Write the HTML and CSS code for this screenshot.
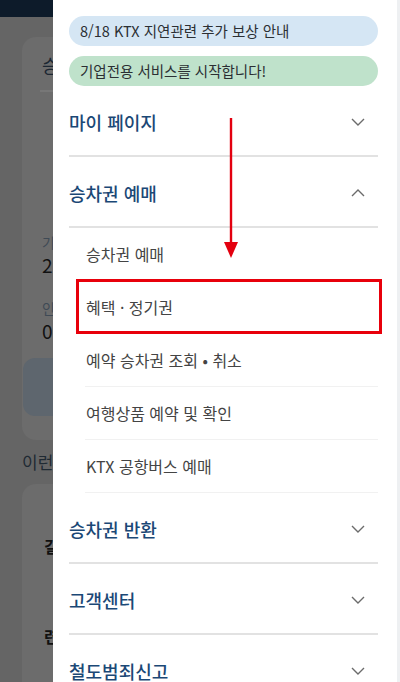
FILE: index.html
```html
<!DOCTYPE html>
<html lang="ko">
<head>
  <meta charset="UTF-8">
  <meta name="viewport" content="width=device-width, initial-scale=1.0">
  <title>메뉴</title>
  <link rel="stylesheet" href="styles.css">
</head>
<body>
  <div class="screen">
    <div class="backdrop">
      <div class="topbar"></div>
      <div class="page">
        <div class="card">
          <div class="card-title">승</div>
          <div class="card-line"></div>
          <div class="field field-date">
            <span class="field-label">기</span>
            <span class="field-value">2</span>
          </div>
          <div class="field">
            <span class="field-label">인</span>
            <span class="field-value">0</span>
          </div>
          <div class="card-button"></div>
        </div>
        <div class="section-title">이런</div>
        <div class="card card-low">
          <div class="low-row">길</div>
          <div class="low-row">련</div>
        </div>
      </div>
    </div>

    <nav class="drawer">
      <div class="notice notice-blue">8/18 KTX 지연관련 추가 보상 안내</div>
      <div class="notice notice-green">기업전용 서비스를 시작합니다!</div>

      <div class="menu-head">
        <span>마이 페이지</span>
        <svg class="chev" width="14" height="8" viewBox="0 0 14 8"><path d="M1 1l6 6 6-6" /></svg>
      </div>

      <div class="menu-head">
        <span>승차권 예매</span>
        <svg class="chev" width="14" height="8" viewBox="0 0 14 8"><path d="M1 7l6-6 6 6" /></svg>
      </div>
      <ul class="sub">
        <li>승차권 예매</li>
        <li class="marked">혜택 · 정기권<span class="mark-box"></span></li>
        <li>예약 승차권 조회 • 취소</li>
        <li>여행상품 예약 및 확인</li>
        <li>KTX 공항버스 예매</li>
      </ul>

      <div class="menu-head">
        <span>승차권 반환</span>
        <svg class="chev" width="14" height="8" viewBox="0 0 14 8"><path d="M1 1l6 6 6-6" /></svg>
      </div>
      <div class="menu-head">
        <span>고객센터</span>
        <svg class="chev" width="14" height="8" viewBox="0 0 14 8"><path d="M1 1l6 6 6-6" /></svg>
      </div>
      <div class="menu-head">
        <span>철도범죄신고</span>
        <svg class="chev" width="14" height="8" viewBox="0 0 14 8"><path d="M1 1l6 6 6-6" /></svg>
      </div>

      <!-- annotation arrow -->
      <svg class="arrow" width="16" height="142" viewBox="0 0 16 142">
        <rect x="6.8" y="0" width="2.4" height="128" fill="#e3000f" />
        <path d="M1 124 L15 124 L8 140 Z" fill="#e3000f" />
      </svg>
    </nav>
  </div>
</body>
</html>
```

FILE: styles.css
```css
body {
  margin: 0;
  padding: 0;
  font-family: "Noto Sans CJK KR", "Noto Sans", sans-serif;
  background: #676767;
}
.screen {
  display: flex;
  width: 400px;
  height: 682px;
  overflow: hidden;
}

/* dimmed page behind the drawer */
.backdrop {
  width: 53px;
  flex-shrink: 0;
  overflow: hidden;
  background: #656565;
}
.topbar {
  height: 17px;
  background: #0d1b2a;
}
.page {
  padding: 20px 0 0 22px;
  white-space: nowrap;
}
.card {
  background: #6c6c6c;
  border-radius: 14px 0 0 14px;
  height: 403px;
  padding: 0 0 0 20px;
  box-sizing: border-box;
}
.card-title {
  padding-top: 15px;
  font-size: 18px;
  line-height: 26px;
  color: #1c2733;
}
.card-line {
  height: 2px;
  background: #777;
  margin: 12px 0 0 -2px;
}
.field {
  display: flex;
  flex-direction: column;
  margin-top: 20px;
}
.field-date {
  margin-top: 140px;
}
.field-label {
  font-size: 14px;
  line-height: 20px;
  color: #3f4a55;
}
.field-value {
  font-size: 19px;
  line-height: 26px;
  color: #111;
}
.card-button {
  margin: 14px 0 0 -19px;
  height: 58px;
  background: #5e666e;
  border-radius: 12px 0 0 12px;
}
.section-title {
  font-size: 17px;
  line-height: 24px;
  margin: 10px 0 0 0;
  color: #1f2a33;
}
.card-low {
  margin-top: 10px;
  height: 240px;
  padding-left: 22px;
}
.low-row {
  font-size: 16px;
  font-weight: bold;
  color: #111;
  padding-top: 50px;
  height: 44px;
}
.low-row + .low-row {
  padding-top: 46px;
}

/* drawer */
.drawer {
  position: relative;
  flex: 1;
  background: #fff;
  padding: 16px 19px 0 16px;
  display: flex;
  flex-direction: column;
  border-right: 3px solid #eef0f2;
}
.notice {
  height: 30px;
  line-height: 30px;
  border-radius: 15px;
  padding: 0 11px;
  font-size: 14.5px;
  color: #2b2f33;
  flex-shrink: 0;
}
.notice-blue {
  background: #d5e6f4;
}
.notice-green {
  background: #bfe2cb;
  margin-top: 10px;
}
.menu-head {
  display: flex;
  align-items: center;
  justify-content: space-between;
  height: 67px;
  padding-top: 2px;
  flex-shrink: 0;
  border-bottom: 2px solid #e2e2e2;
  box-sizing: content-box;
  font-size: 18px;
  font-weight: 500;
  color: #1b4876;
}
.menu-head:last-of-type {
  border-bottom: none;
}
.chev {
  margin-right: 13px;
  fill: none;
  stroke: #6b6b6b;
  stroke-width: 1.4;
}
.sub {
  list-style: none;
  margin: 0;
  padding: 0 0 0 16px;
  flex-shrink: 0;
}
.sub li {
  position: relative;
  height: 52px;
  line-height: 52px;
  border-bottom: 1px solid #f1f1f1;
  font-size: 16px;
  color: #444;
  padding-left: 1px;
}
.mark-box {
  position: absolute;
  left: -9px;
  right: -4px;
  top: -2px;
  bottom: -1px;
  border: 3px solid #e8000b;
}
.arrow {
  position: absolute;
  left: 170px;
  top: 118px;
}
```
